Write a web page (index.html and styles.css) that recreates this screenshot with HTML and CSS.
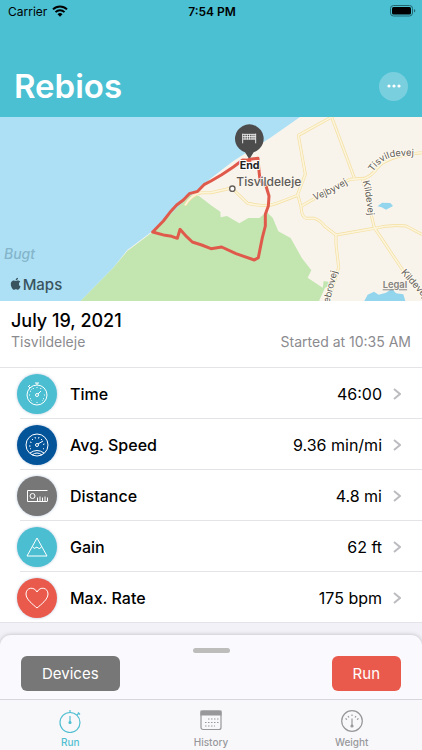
FILE: index.html
```html
<!DOCTYPE html>
<html lang="en">
<head>
<meta charset="utf-8">
<meta name="viewport" content="width=device-width, initial-scale=1">
<title>Rebios</title>
<link rel="stylesheet" href="styles.css">
</head>
<body>
<header class="header">
  <div class="status">
    <div class="carrier">
      <span>Carrier</span>
      <svg width="16" height="12" viewBox="0 0 16 12" fill="none" stroke="#000" stroke-width="2" aria-hidden="true"><path d="M1 4.4a10 10 0 0 1 14 0M3.5 7.1a6.4 6.4 0 0 1 9 0"/><path d="M5.5 9.2a3.6 3.6 0 0 1 5 0L8 11.8z" fill="#000" stroke="none"/></svg>
    </div>
    <span class="clock">7:54 PM</span>
    <svg class="battery" width="26" height="12" viewBox="0 0 26 12" aria-hidden="true"><rect x=".5" y=".5" width="22" height="10.500" rx="3" fill="none" stroke="#226770"/><rect x="2" y="2" width="19" height="7.500" rx="1.500"/><path d="M24 4v3.500q1.300-.4 1.300-1.750T24 4" fill="#226770"/></svg>
  </div>
  <div class="titlebar">
    <h1>Rebios</h1>
    <button class="more" type="button" aria-label="More"><svg width="14" height="4" viewBox="0 0 14 4" fill="#fff"><circle cx="2" cy="2" r="1.600"/><circle cx="7" cy="2" r="1.600"/><circle cx="12" cy="2" r="1.600"/></svg></button>
  </div>
</header>
<main class="main">
  <svg class="map" viewBox="0 3 1266 552" role="img" aria-label="Route map">
    <defs>
      <path id="coast-road" d="M1118 168Q1144 130 1180 123T1266 121"/>
      <path id="west-road" d="M944 253Q1000 234 1070 186"/>
      <path id="south-road" d="M1088 196Q1101 242 1106 325"/>
      <g id="roads" fill="none" stroke-linejoin="round">
        <path d="M995 3L895 58L916 175L893 235Q900 260 903 272Q905 303 918 307H943Q963 314 973 330L1008 357L1123 337Q1170 325 1218 330L1266 355"/>
        <path d="M995 3L1063 186"/>
        <path d="M555 268Q575 235 605 230H633L695 216L743 262Q800 275 830 262L893 238"/>
        <path d="M905 270L960 238L1050 190L1094 187Q1115 180 1133 155Q1160 120 1266 110"/>
        <path d="M1088 190L1123 335L1210 465L1266 535"/>
        <path d="M1008 357V385L1016 455L985 555"/>
      </g>
    </defs>
    <path d="M0 0H1266V555H0z" fill="#f8f4ec"/>
    <path d="M0 3H900L810 66L700 135L633 187L585 228L550 260L458 345L382 402L340 455L242 555H0z" fill="#ade0f5"/>
    <path d="M242 555L340 455L382 405L458 348L570 238L597 240L633 268L661 287L662 304L681 300L718 322L745 306L778 306L800 288L818 305L835 346L872 366L905 425L934 463L923 485L968 515L971 495L988 498V510L975 515L957 555z" fill="#c3e6b1"/>
    <path d="M1133 271L1146 260L1171 261L1179 270L1158 281L1145 274zM1093 555L1103 536L1122 527L1136 536L1158 530L1176 518L1188 532L1210 535L1216 555z" fill="#94d5ee"/>
    <use href="#roads" stroke="#f4df9f" stroke-width="9"/>
    <use href="#roads" stroke="#fcf4db" stroke-width="5"/>
    <g class="road-labels">
      <text><textPath href="#coast-road">Tisvildevej</textPath></text>
      <text><textPath href="#west-road">Vejbyvej</textPath></text>
      <text><textPath href="#south-road">Kildevej</textPath></text>
      <text transform="translate(1202 470) rotate(48)">Kildevej</text>
      <text transform="translate(988 562) rotate(-76)">ebrovej</text>
    </g>
    <path class="route" d="M748 130L774 127L777 165L780 192L798 210L807 240L805 270L796 295L796 330L787 365L775 425L763 432L708 413L665 393L633 398L605 387L577 378L560 362L540 340L532 367L515 361L495 358L458 348L490 315L510 289L530 267L550 252L568 233L593 226L612 206L633 195L665 176L700 153L728 132L754 133"/>
    <circle cx="697" cy="218" r="8" fill="#fff" stroke="#655e58" stroke-width="4"/>
    <text class="town" x="709" y="211">Tisvildeleje</text>
    <text class="sea" x="12" y="430">Bugt</text>
    <path transform="translate(29 485) scale(1.500)" fill="#39545f" d="M12.152 6.896c-.948 0-2.415-1.078-3.960-1.040-2.040.027-3.910 1.183-4.961 3.014-2.117 3.675-.546 9.103 1.519 12.090 1.013 1.454 2.208 3.090 3.792 3.039 1.520-.065 2.090-.987 3.935-.987 1.831 0 2.350.987 3.960.948 1.637-.026 2.676-1.480 3.676-2.948 1.156-1.688 1.636-3.325 1.662-3.415-.039-.013-3.182-1.221-3.220-4.857-.026-3.040 2.480-4.494 2.597-4.559-1.429-2.090-3.623-2.324-4.390-2.376-2-.156-3.675 1.090-4.610 1.090zM15.530 3.830c.843-1.012 1.400-2.427 1.245-3.830-1.207.052-2.662.805-3.532 1.818-.780.896-1.454 2.338-1.273 3.714 1.338.104 2.715-.688 3.559-1.701"/>
    <text class="brand" x="68" y="521">Maps</text>
    <a href="#legal"><text class="legal" x="1148" y="517">Legal</text></a>
    <path d="M748 130L735 109A43 43 0 1 1 761 109z" fill="#4c4c4c"/>
    <circle cx="748" cy="131" r="6" fill="#e05a4c"/>
    <path d="M728 53V82M767 53V82M728 55H767M728 62H767M728 69H767M735 55V71M742 55V71M749 55V71M756 55V71M762 55V71" fill="none" stroke="#fff" stroke-width="2.500"/>
    <text class="end" x="719" y="159">End</text>
  </svg>
  <section class="summary">
    <h2>July 19, 2021</h2>
    <div class="details"><span>Tisvildeleje</span><span>Started at 10:35 AM</span></div>
  </section>
  <ul class="stats">
    <li><a href="#time">
      <span class="badge teal"><svg viewBox="0 0 24 24"><circle cx="12" cy="13" r="10"/><circle cx="12" cy="13" r="1.500"/><path d="M13 12L16 9M10 1H14M12 1V3M4 6L5 5M3 5L5 3"/><path d="M12 5V6M12 20V21M4 13H5M19 13H20M6.500 7.500L7 8M17.500 18.500L17 18M6.500 18.500L7 18M8 6L8.500 7M16 6L15.500 7M5 9L6 9.500M5 17L6 16.500M19 17L18 16.500"/></svg></span>
      <span class="name">Time</span><span class="value">46:00</span><svg class="chevron" viewBox="0 0 8 12"><path d="M1 1L7 6L1 11"/></svg></a></li>
    <li><a href="#speed">
      <span class="badge blue"><svg viewBox="0 0 24 24"><circle cx="12" cy="12" r="11"/><path d="M5 20Q12 15 19 20M7 22Q12 18 17 22M13 11L18 8"/><circle cx="12" cy="12" r="1.500"/><path d="M4 13H5.500M5 9L6.500 9.500M7 6L8 7M10 4L10.500 5.500M14 4L13.500 5.500M17 6L16 7M19.500 11L18 11.500M5 16L6 15.500M19 16L18 15.500"/></svg></span>
      <span class="name">Avg. Speed</span><span class="value">9.36 min/mi</span><svg class="chevron" viewBox="0 0 8 12"><path d="M1 1L7 6L1 11"/></svg></a></li>
    <li><a href="#distance">
      <span class="badge gray"><svg viewBox="0 0 24 24"><path d="M22.500 6.500H2.500V17.500H22.500M12.500 17V13.500M15 17V12.500M17.500 17V13.500M20 17V12.500M22.500 17V13.500"/><circle cx="7.500" cy="12" r="2.500"/></svg></span>
      <span class="name">Distance</span><span class="value">4.8 mi</span><svg class="chevron" viewBox="0 0 8 12"><path d="M1 1L7 6L1 11"/></svg></a></li>
    <li><a href="#gain">
      <span class="badge teal"><svg viewBox="0 0 24 24"><path d="M12 3L2 21H22zM7.500 11.500Q9 15 11 12.500Q12 11.500 13 13Q15 15 16.500 11.500"/></svg></span>
      <span class="name">Gain</span><span class="value">62 ft</span><svg class="chevron" viewBox="0 0 8 12"><path d="M1 1L7 6L1 11"/></svg></a></li>
    <li><a href="#rate">
      <span class="badge red"><svg viewBox="0 0 24 24"><path d="M12 22C8 18.500 1 13.500 1 8C1 1.500 9 0 12 6C15 0 23 1.500 23 8C23 13.500 16 18.500 12 22z"/></svg></span>
      <span class="name">Max. Rate</span><span class="value">175 bpm</span><svg class="chevron" viewBox="0 0 8 12"><path d="M1 1L7 6L1 11"/></svg></a></li>
  </ul>
</main>
<section class="sheet" aria-label="Actions">
  <div class="grabber"></div>
  <div class="actions">
    <button class="action gray" type="button">Devices</button>
    <button class="action red" type="button">Run</button>
  </div>
</section>
<nav class="tabs">
  <a class="tab active" href="#run"><svg viewBox="0 0 24 24"><circle cx="12" cy="13.500" r="10"/><circle cx="12" cy="13.500" r="1" fill="currentColor"/><path d="M12 7V13M12 1V4M19 6L21 4M20 3.500L22 5.500"/></svg><span>Run</span></a>
  <a class="tab" href="#history"><svg viewBox="0 0 24 24"><rect x="2" y="2" width="20" height="18.500" rx="2"/><path d="M2 2H22V6H2z" fill="currentColor"/><path d="M9 10H20M6 13.500H20M6 17H16" stroke-dasharray="1.500 1.500"/></svg><span>History</span></a>
  <a class="tab" href="#weight"><svg viewBox="0 0 24 24"><circle cx="12" cy="12" r="10.300"/><circle cx="12" cy="17" r="1" fill="currentColor"/><path d="M12 9.500V17"/><path d="M5.500 9.500L7 10.500M8 7L9 8.500M12 5.500V7M16 7L15 8.500M18.500 9.500L17 10.500"/></svg><span>Weight</span></a>
</nav>
</body>
</html>
```
FILE: styles.css
```css
* { box-sizing: border-box; }

body {
  margin: 0;
  min-height: 100vh;
  display: flex;
  flex-direction: column;
  background: #f2f1f7;
  color: #000;
  font-family: Inter, "Liberation Sans", sans-serif;
}

h1, h2, ul { margin: 0; padding: 0; }
a { color: inherit; text-decoration: none; }
button { border: 0; padding: 0; font: inherit; color: #fff; }

.header { background: #4bc0d3; padding-bottom: 11px; }

.status {
  display: grid;
  grid-template-columns: 1fr auto 1fr;
  align-items: center;
  height: 22px;
  padding: 0 6px 0 8px;
  font-size: 12px;
}
.carrier { display: flex; align-items: center; gap: 5px; }
.clock { font-weight: 600; }
.battery { justify-self: end; }

.titlebar {
  display: flex;
  justify-content: space-between;
  align-items: center;
  margin-top: 44px;
  padding: 0 14px;
}
h1 { font-size: 33px; line-height: 40px; font-weight: 600; color: #fff; }
.more {
  display: flex;
  align-items: center;
  justify-content: center;
  width: 29px;
  height: 29px;
  border-radius: 50%;
  background: #79cfdd;
}

.main { flex: 1; }
.map { display: block; width: 100%; height: auto; }
.route { fill: none; stroke: #e05a4c; stroke-width: 9; stroke-linejoin: round; }
.map text { paint-order: stroke; stroke-linejoin: round; }
.road-labels { font-size: 28px; fill: #5d5a58; stroke: #fffaf0; stroke-width: 6px; }
.town { font-size: 36px; font-weight: 500; fill: #5d5a58; stroke: #faf5ec; stroke-width: 4px; }
.sea { font-size: 42px; font-weight: 500; font-style: italic; fill: #84b5cb; }
.brand { font-size: 45px; font-weight: 500; fill: #39545f; }
.legal { font-size: 28px; font-weight: 600; fill: #85827e; text-decoration: underline; }
.end { font-size: 32px; font-weight: 700; fill: #222; stroke: #fff; stroke-width: 6px; }

.summary { height: 66px; padding: 8px 11px; background: #fff; }
h2 { font-size: 18px; line-height: 24px; font-weight: 500; }
.details {
  display: flex;
  justify-content: space-between;
  font-size: 14px;
  line-height: 18px;
  color: #8b8b8f;
}

.stats { list-style: none; background: #fff; border-top: 1px solid #e4e4e8; }
.stats a {
  display: flex;
  align-items: center;
  height: 51px;
  padding: 0 21px 0 17px;
  font-size: 16px;
}
.stats li { background: linear-gradient(#e4e4e8, #e4e4e8) 20px 100% / 100% 1px no-repeat; }
.stats li:last-child { background-position-x: 0; }
.badge {
  display: flex;
  align-items: center;
  justify-content: center;
  width: 40px;
  height: 40px;
  margin-right: 13px;
  border-radius: 50%;
  box-shadow: 0 0 3px #b8c8dc;
}
.badge svg { width: 24px; height: 24px; fill: none; stroke: #fff; stroke-width: 1; }
.teal { background: #4bbfd1; }
.blue { background: #04549a; }
.gray { background: #777; }
.red { background: #ea5a4c; }
.name { flex: 1; font-weight: 500; }
.chevron { width: 8px; height: 12px; margin-left: 11px; fill: none; stroke: #bcbcc0; stroke-width: 2; }

.sheet {
  margin-top: 12px;
  padding: 13px 21px 8px;
  border-radius: 11px 11px 0 0;
  background: #fafafe;
  box-shadow: 0 0 4px #b9b9be;
}
.grabber { width: 37px; height: 5px; margin: 0 auto 3px; border-radius: 3px; background: #bdbdbc; }
.actions { display: flex; justify-content: space-between; }
.action { height: 35px; padding: 0 21px; border-radius: 6px; font-size: 15px; }

.tabs {
  display: grid;
  grid-template-columns: repeat(3, 1fr);
  position: relative;
  height: 51px;
  border-top: 1px solid #d6d6dc;
  background: #f8f8fb;
}
.tab {
  display: flex;
  flex-direction: column;
  align-items: center;
  padding-top: 9px;
  color: #98989b;
  font-size: 10px;
  line-height: 14px;
  font-weight: 500;
}
.tab svg { width: 24px; height: 24px; margin-bottom: 2px; fill: none; stroke: currentColor; stroke-width: 1.2; }
.active { color: #51bfd0; }
```
